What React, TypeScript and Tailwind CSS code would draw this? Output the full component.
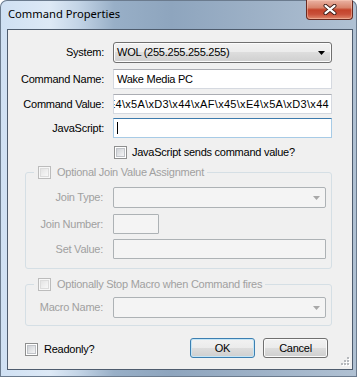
import React from "react";

function Check({ disabled }: { disabled?: boolean }) {
  return (
    <div
      className={`w-[13px] h-[13px] shrink-0 border flex items-center justify-center ${
        disabled ? "border-[#bcbcbc] bg-[#f7f7f7]" : "border-[#8e8f8f] bg-white"
      }`}
    >
      <div
        className={`w-[9px] h-[9px] border ${
          disabled
            ? "border-[#dcdcdc] bg-[linear-gradient(135deg,#e4e4e4,#f8f8f8)]"
            : "border-[#c0c3c8] bg-[linear-gradient(135deg,#cfd2d6,#f4f4f5)]"
        }`}
      />
    </div>
  );
}

function Arrow({ color }: { color: string }) {
  return (
    <svg width="7" height="4" viewBox="0 0 7 4" className="shrink-0">
      <path d="M0 0H7L3.5 4Z" fill={color} />
    </svg>
  );
}

function Combo({ text, disabled, w }: { text?: string; disabled?: boolean; w: string }) {
  if (disabled) {
    return (
      <div className={`${w} h-[21px] rounded-[2px] border border-[#adb2b5] bg-[#f4f4f4] flex items-center justify-end pr-[5px]`}>
        <Arrow color="#a8a8a8" />
      </div>
    );
  }
  return (
    <div className={`${w} h-[21px] rounded-[3px] border border-[#707070] bg-[linear-gradient(#f2f2f2,#ebebeb_50%,#dddddd_50%,#cfcfcf)] shadow-[inset_0_0_0_1px_#fcfcfc] flex items-center pl-[3px] pr-[6px]`}>
      <span className="flex-1 leading-[13px] text-black">{text}</span>
      <Arrow color="#000000" />
    </div>
  );
}

function Label({ children, disabled, w }: { children: React.ReactNode; disabled?: boolean; w: string }) {
  return (
    <div className={`${w} shrink-0 text-right leading-[13px] whitespace-nowrap ${disabled ? "text-[#a0a0a0]" : "text-black"}`}>
      {children}
    </div>
  );
}

function Legend({ text }: { text: string }) {
  return (
    <div className="absolute left-[8px] top-[-7px] flex items-center bg-[#f0f0f0] pl-[4px] pr-[3px]">
      <Check disabled />
      <span className="ml-[6px] leading-[13px] text-[#a0a0a0] whitespace-nowrap">{text}</span>
    </div>
  );
}

function Button({ children, def }: { children: React.ReactNode; def?: boolean }) {
  return (
    <div
      className={`w-[65px] h-[20px] rounded-[3px] border flex items-center justify-center leading-[13px] text-black bg-[linear-gradient(#f2f2f2,#ebebeb_50%,#dddddd_50%,#cfcfcf)] ${
        def
          ? "border-[#3c7fb1] shadow-[inset_0_0_0_1px_#c4e5f6]"
          : "border-[#707070] shadow-[inset_0_0_0_1px_#fbfbfb]"
      }`}
    >
      {children}
    </div>
  );
}

function CloseButton() {
  return (
    <div className="w-[47px] h-[20px] rounded-b-[4px] border border-t-0 border-[#6a2a20] bg-[linear-gradient(#eab3a4,#d8846c_40%,#c4432a_52%,#c9503a_75%,#e0886b)] shadow-[inset_0_0_0_1px_rgba(255,210,190,0.45)] flex items-center justify-center">
      <svg width="14" height="11" viewBox="0 0 14 11">
        <path d="M2.5 1.8L11.5 9.2M11.5 1.8L2.5 9.2" stroke="#3a1a15" strokeWidth="4" strokeLinecap="round" />
        <path d="M2.5 1.8L11.5 9.2M11.5 1.8L2.5 9.2" stroke="#ffffff" strokeWidth="2.2" strokeLinecap="round" />
      </svg>
    </div>
  );
}

function SizeGrip() {
  const dots: [number, number][] = [
    [6, 0],
    [3, 3],
    [6, 3],
    [0, 6],
    [3, 6],
    [6, 6],
  ];
  return (
    <svg width="9" height="9" viewBox="0 0 9 9" className="absolute right-[2px] bottom-[3px]">
      {dots.map(([x, y], i) => (
        <g key={i}>
          <rect x={x + 1} y={y + 1} width="2" height="2" fill="#ffffff" />
          <rect x={x} y={y} width="2" height="2" fill="#b6b9bd" />
        </g>
      ))}
    </svg>
  );
}

export default function App() {
  const cmdValue = "\\xE4\\x5A\\xD3\\x44\\xAF\\x45\\xE4\\x5A\\xD3\\x44";
  return (
    <div className="w-[357px] h-[377px] overflow-hidden rounded-t-[7px] bg-[linear-gradient(90deg,#cfe0f3_0%,#dde9f6_14%,#c3d4e6_22%,#98afc7_32%,#8ea5be_48%,#9cb0c6_70%,#b0c1d3_100%)] shadow-[inset_0_0_0_1px_#6b7b8e] flex flex-col pl-[7px] pr-[4px] font-['Liberation_Sans',Arial,sans-serif] text-[11px]">
      <div className="h-[29px] flex items-start justify-between shrink-0">
        <div className="pt-[6px] pl-[1px] text-[11.2px] leading-[16px] text-black font-['Noto_Sans','Open_Sans',sans-serif]">
          Command Properties
        </div>
        <CloseButton />
      </div>
      <div className="relative h-[341px] shrink-0 border border-[#4e5c6e] bg-[#f0f0f0] flex flex-col pt-[12px] tracking-[-0.25px]">
        {/* System */}
        <div className="flex items-center">
          <Label w="w-[96px]">System:</Label>
          <div className="ml-[9px]">
            <Combo w="w-[219px]" text="WOL (255.255.255.255)" />
          </div>
        </div>
        {/* Command Name */}
        <div className="flex items-center mt-[6px]">
          <Label w="w-[96px]">Command Name:</Label>
          <div className="ml-[9px] w-[219px] h-[20px] border border-[#d5d9e0] border-t-[#abadb3] bg-white flex items-center pl-[3px] leading-[13px] text-black">
            Wake Media PC
          </div>
        </div>
        {/* Command Value */}
        <div className="flex items-center mt-[5px]">
          <Label w="w-[96px]">Command Value:</Label>
          <div className="ml-[9px] w-[219px] h-[20px] border border-[#d5d9e0] border-t-[#abadb3] bg-white overflow-hidden">
            <div className="h-full flex items-center justify-end pr-[2px] leading-[13px] text-black whitespace-nowrap tracking-[0.3px] overflow-hidden">
              <span className="shrink-0">{cmdValue}</span>
            </div>
          </div>
        </div>
        {/* JavaScript */}
        <div className="flex items-center mt-[4px]">
          <Label w="w-[96px]">JavaScript:</Label>
          <div className="ml-[9px] w-[219px] h-[20px] border border-[#a7cbe6] border-t-[#3d7bad] bg-white flex items-center pl-[3px]">
            <div className="w-[1px] h-[12px] bg-black" />
          </div>
        </div>
        {/* checkbox */}
        <div className="flex items-center mt-[8px] ml-[106px]">
          <Check />
          <span className="ml-[5px] leading-[13px] text-black">JavaScript sends command value?</span>
        </div>
        {/* Group 1 */}
        <div className="relative ml-[17px] mt-[13px] w-[307px] h-[97px] shrink-0 rounded-[3px] border border-[#d5dfe5] pt-[14px] flex flex-col">
          <Legend text="Optional Join Value Assignment" />
          <div className="flex items-center">
            <Label w="w-[77px]" disabled>Join Type:</Label>
            <div className="ml-[10px]">
              <Combo w="w-[213px]" disabled />
            </div>
          </div>
          <div className="flex items-center mt-[6px]">
            <Label w="w-[77px]" disabled>Join Number:</Label>
            <div className="ml-[10px] w-[46px] h-[20px] rounded-[1px] border border-[#adb2b5] bg-[#f4f4f4]" />
          </div>
          <div className="flex items-center mt-[5px]">
            <Label w="w-[77px]" disabled>Set Value:</Label>
            <div className="ml-[10px] w-[213px] h-[20px] rounded-[1px] border border-[#adb2b5] bg-[#f4f4f4]" />
          </div>
        </div>
        {/* Group 2 */}
        <div className="relative ml-[17px] mt-[15px] w-[307px] h-[42px] shrink-0 rounded-[3px] border border-[#d5dfe5] pt-[12px] flex flex-col">
          <Legend text="Optionally Stop Macro when Command fires" />
          <div className="flex items-center">
            <Label w="w-[77px]" disabled>Macro Name:</Label>
            <div className="ml-[10px]">
              <Combo w="w-[213px]" disabled />
            </div>
          </div>
        </div>
        {/* Bottom row */}
        <div className="flex items-start mt-[12px]">
          <div className="flex items-center ml-[17px] mt-[5px] w-[165px]">
            <Check />
            <span className="ml-[6px] leading-[13px] text-black">Readonly?</span>
          </div>
          <Button def>OK</Button>
          <div className="ml-[8px]">
            <Button>Cancel</Button>
          </div>
        </div>
        <SizeGrip />
      </div>
    </div>
  );
}
